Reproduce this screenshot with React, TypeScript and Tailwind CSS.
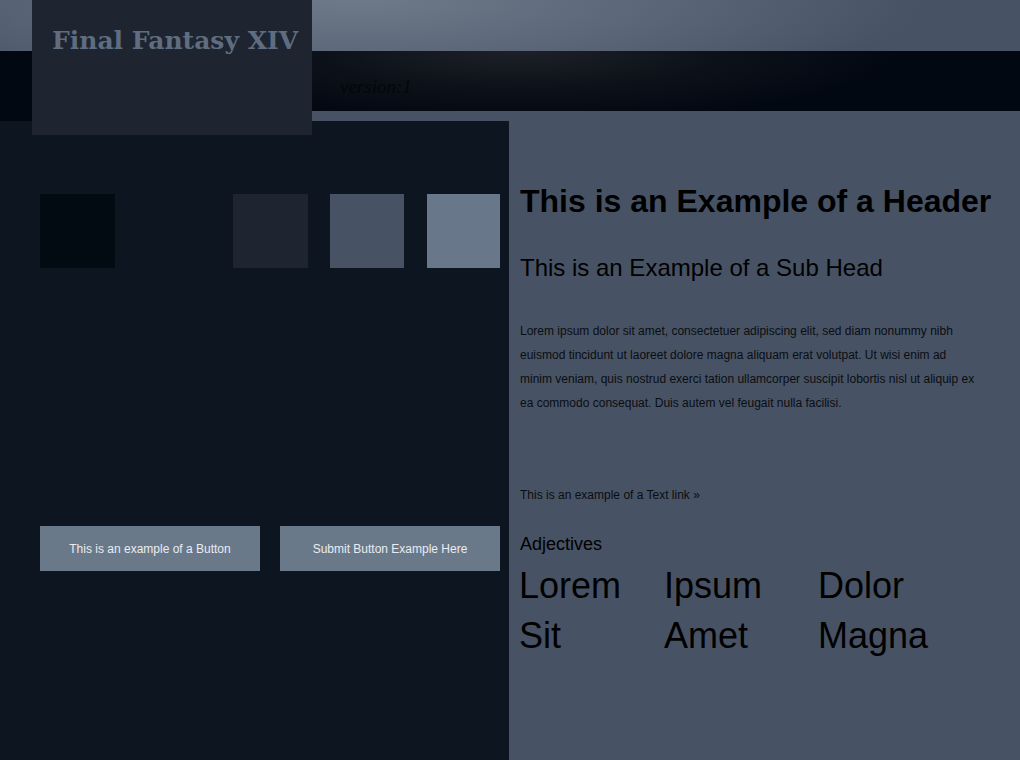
const swatches = [
  'w-[75px] bg-[#020a12]',
  'w-[75px] ml-[22px] bg-[#0c1520]',
  'w-[75px] ml-[21px] bg-[#1e2430]',
  'w-[74px] ml-[22px] bg-[#475364]',
  'w-[73px] ml-[23px] bg-[#687789]',
];

const adjectives = ['Lorem', 'Ipsum', 'Dolor', 'Sit', 'Amet', 'Magna'];

const topBand =
  'h-[51px] bg-fixed bg-[radial-gradient(ellipse_560px_110px_at_360px_0px,#6e7a89_0%,#5a6677_55%,#475364_100%)]';
const darkBand =
  'bg-fixed bg-[radial-gradient(ellipse_380px_70px_at_520px_51px,#1d2027_0%,#0c1119_55%,#020812_100%)]';

export default function App() {
  return (
    <div className="min-h-[760px] bg-[#475364] font-['Liberation_Sans',Arial,sans-serif]">
      {/* Header bands with overlapping title block */}
      <header className="flex h-[121px] items-start">
        <div className="flex h-[121px] w-[32px] flex-col">
          <div className={topBand} />
          <div className={`flex-1 ${darkBand}`} />
        </div>
        <div className="relative z-10 h-[135px] w-[280px] bg-[#1e2430] pl-[20px] pt-[27px]">
          <h1 className="font-['DejaVu_Serif',Georgia,serif] text-[25px] leading-[28px] font-bold text-[#5f6d80]">
            Final Fantasy XIV
          </h1>
        </div>
        <div className="flex flex-1 flex-col">
          <div className={topBand} />
          <div className={`h-[60px] pl-[28px] pt-[25px] ${darkBand}`}>
            <span className="font-['Liberation_Serif','Times_New_Roman',serif] text-[19px] leading-[22px] italic text-[#03060a]">
              version:1
            </span>
          </div>
        </div>
      </header>

      <main className="flex">
        {/* Left panel: swatches and buttons */}
        <section className="min-h-[639px] w-[509px] bg-[#0c1520] pt-[73px] pl-[40px]">
          <div className="flex">
            {swatches.map((c, i) => (
              <div key={i} className={`h-[74px] ${c}`} />
            ))}
          </div>
          <div className="mt-[258px] flex gap-[20px]">
            <button className="h-[45px] w-[220px] bg-[#6a798a] text-[12px] text-[#e9ecf0]">
              This is an example of a Button
            </button>
            <button className="h-[45px] w-[220px] bg-[#6a798a] text-[12px] text-[#e9ecf0]">
              Submit Button Example Here
            </button>
          </div>
        </section>

        {/* Right panel: typography samples */}
        <section className="flex-1 pl-[11px] pt-[62px] text-black">
          <h2 className="text-[32px] leading-[36px] font-bold">This is an Example of a Header</h2>
          <h3 className="mt-[35px] text-[24px] leading-[28px]">This is an Example of a Sub Head</h3>
          <p className="mt-[37px] w-[458px] text-[12px] leading-[24px] text-[#0a0d12]">
            Lorem ipsum dolor sit amet, consectetuer adipiscing elit, sed diam nonummy nibh euismod tincidunt ut
            laoreet dolore magna aliquam erat volutpat. Ut wisi enim ad minim veniam, quis nostrud exerci tation
            ullamcorper suscipit lobortis nisl ut aliquip ex ea commodo consequat. Duis autem vel feugait nulla
            facilisi.
          </p>
          <a href="#" className="mt-[72px] block text-[12px] leading-[16px] text-[#0a0d12]">
            This is an example of a Text link &raquo;
          </a>
          <h4 className="mt-[29px] text-[18px] leading-[24px]">Adjectives</h4>
          <div className="-ml-[1px] mt-[5px] grid grid-cols-[145px_154px_auto] text-[36px] leading-[50px]">
            {adjectives.map((a) => (
              <span key={a}>{a}</span>
            ))}
          </div>
        </section>
      </main>
    </div>
  );
}
